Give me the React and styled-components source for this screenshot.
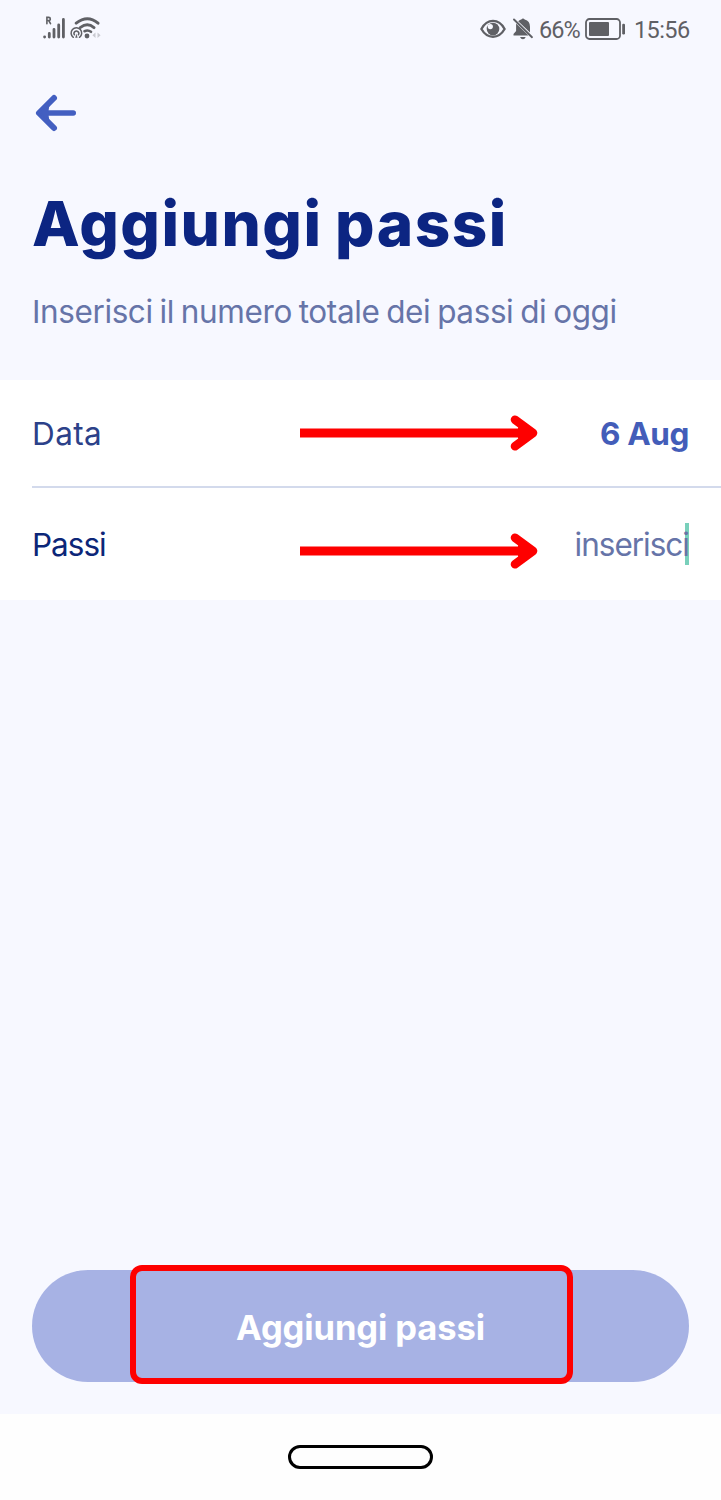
import React from 'react';
import styled, { createGlobalStyle } from 'styled-components';

const GlobalStyle = createGlobalStyle`
  * {
    box-sizing: border-box;
  }

  body {
    margin: 0;
    background: #f7f8ff;
    font-family: 'Inter', sans-serif;
  }
`;

const Screen = styled.div`
  display: flex;
  flex-direction: column;
  height: 1500px;
  width: 721px;
  background: #f7f8ff;
`;

const StatusBar = styled.div`
  display: flex;
  justify-content: space-between;
  height: 58px;
  padding-left: 42px;
  padding-right: 31px;
  color: #5f6065;
`;

const StatusGroup = styled.div`
  display: flex;
  align-items: center;
`;

const StatusIcon = styled.span`
  display: flex;
  width: ${props => props.$width}px;
  margin-left: ${props => props.$gap}px;
`;

const StatusText = styled.span`
  width: ${props => props.$width}px;
  margin-left: ${props => props.$gap}px;
  padding-top: 2px;
  font-family: 'Roboto', sans-serif;
  font-size: 23.5px;
  line-height: 28px;
  letter-spacing: ${props => props.$spacing}px;
  white-space: nowrap;
`;

const Header = styled.header`
  height: 322px;
  padding: 35px 32px 0;
`;

const BackButton = styled.button`
  display: block;
  width: 46px;
  height: 40px;
  padding: 0;
  border: 0;
  background: none;
`;

const Title = styled.h1`
  margin: 49px 0 0;
  font-size: 62px;
  line-height: 84px;
  font-weight: 800;
  letter-spacing: 1.5px;
  word-spacing: -2.5px;
  color: #0c2582;
  white-space: nowrap;
`;

const Subtitle = styled.p`
  margin: 26px 0 0;
  font-size: 31.5px;
  line-height: 40px;
  letter-spacing: -0.4px;
  word-spacing: -1.6px;
  color: #6674a8;
  white-space: nowrap;
`;

const Form = styled.div`
  height: 220px;
  padding-left: 32px;
  background: #fff;
`;

const Row = styled.div`
  display: flex;
  align-items: center;
  height: ${props => props.$height}px;
  padding-right: 32px;
  border-bottom: ${props => (props.$divider ? '2px solid #d3daec' : '0')};
`;

const Label = styled.span`
  width: 268px;
  padding-top: 1px;
  font-size: 31.5px;
  line-height: 40px;
  letter-spacing: ${props => props.$spacing}px;
  color: ${props => props.$color};
`;

const Value = styled.span`
  position: relative;
  z-index: 0;
  margin-left: auto;
  padding-top: 1px;
  font-size: 31.5px;
  line-height: 40px;
  font-weight: ${props => (props.$bold ? 700 : 400)};
  letter-spacing: ${props => props.$spacing}px;
  color: ${props => (props.$bold ? '#435db9' : '#6674a8')};
  white-space: nowrap;
`;

const Caret = styled.span`
  position: absolute;
  right: 0;
  top: -1px;
  z-index: -1;
  width: 4px;
  height: 42px;
  background: #79d0bb;
`;

const Pointer = styled.svg`
  flex: none;
  margin-top: ${props => props.$drop || 0}px;
`;

const Footer = styled.div`
  margin-top: auto;
  padding: 0 32px 32px;
`;

const SubmitButton = styled.button`
  position: relative;
  display: block;
  width: 657px;
  height: 112px;
  padding: 3px 0 0;
  border: 0;
  border-radius: 56px;
  background: #a7b2e4;
  color: #fff;
  font-family: inherit;
  font-size: 34.5px;
  font-weight: 700;
  letter-spacing: -0.1px;
`;

const Highlight = styled.span`
  position: absolute;
  left: 98px;
  top: -5px;
  width: 443px;
  height: 119px;
  border: 6px solid #fe0000;
  border-radius: 12px;
`;

const NavigationBar = styled.div`
  display: flex;
  justify-content: center;
  height: 86px;
  padding-top: 31px;
  background: #fefefe;
`;

const HomePill = styled.div`
  width: 145px;
  height: 24px;
  border: 3px solid #000;
  border-radius: 12px;
`;

const SignalIcon = () => (
  <svg width="60" height="28" viewBox="0 0 60 28" fill="none" stroke="#5f6065" strokeLinecap="round">
    <path d="M2.6 21.8V22M7.3 18.5V22M12 14.5V22M16.7 10V22M21.4 4.5V22" strokeWidth="2.8" />
    <path d="M4.9 8.7V2.4H6.7Q8.3 2.4 8.3 4T6.7 5.5H4.9M6.7 5.5L8.5 8.7" strokeWidth="1.6" />
    <path d="M34.2 8.2Q45.5-.8 56 8.2M38.5 12.4Q45.5 7.2 52 12.6" strokeWidth="2.9" />
    <path d="M42.5 16.2Q46 14.6 49 16.8" strokeWidth="2.6" />
    <circle cx="45" cy="21" r="2.4" fill="#5f6065" stroke="none" />
    <path d="M31.3 22.3A5.3 5.3 0 1 1 37.5 22.3M32.4 19.8A2.4 2.4 0 1 1 36.4 19.8" strokeWidth="1.5" />
    <path d="M34.4 18.7L33.2 22.7H35.6Z" fill="#5f6065" stroke="none" />
    <path d="M53.5 17.5L50.4 20.3L53.5 23.1ZM55.5 17.5L58.6 20.3L55.5 23.1Z" fill="#c9cad1" stroke="none" />
  </svg>
);

const EyeIcon = () => (
  <svg width="26" height="20" viewBox="0 0 26 20">
    <path d="M1.4 10C7.2-.8 18.8-.8 24.6 10C18.8 20.3 7.2 20.3 1.4 10Z" fill="none" stroke="#5f6065" strokeWidth="2.3" />
    <circle cx="13" cy="10" r="6.3" fill="#5f6065" />
    <circle cx="10.3" cy="7.6" r="2.6" fill="#f7f8ff" />
  </svg>
);

const BellOffIcon = () => (
  <svg width="22" height="24" viewBox="0 0 22 24">
    <path d="M4.1 6.5V14L1.5 17V18.6H16.5Z" fill="#5f6065" />
    <path d="M6.2 4.2Q8 2.8 9.3 2.5Q11 .4 12.7 2.5Q18 4 18 9.8V15.5Z" fill="#5f6065" />
    <path d="M8 20H13.7Q12.8 22.2 10.9 22.2T8 20Z" fill="#5f6065" />
    <path d="M2 2.5L20 20.2" stroke="#5f6065" strokeWidth="1.9" strokeLinecap="round" />
  </svg>
);

const BatteryIcon = () => (
  <svg width="41" height="22" viewBox="0 0 41 22">
    <rect x="1" y="1" width="34" height="20" rx="3.5" fill="none" stroke="#5f6065" strokeWidth="1.8" />
    <rect x="4" y="4" width="20" height="14" rx="1" fill="#5f6065" />
    <rect x="37.2" y="5.7" width="2.8" height="10.8" rx="1.2" fill="#5f6065" />
  </svg>
);

const ArrowPointer = ({ drop }) => (
  <Pointer width="238" height="36" viewBox="0 0 238 36" $drop={drop}>
    <path d="M0 18H231" stroke="#fe0000" strokeWidth="9" />
    <path d="M215 4.7L233 18L215 31.3" fill="none" stroke="#fe0000" strokeWidth="8.6" strokeLinecap="round" strokeLinejoin="round" />
    <path d="M218 12L232 18L218 24Z" fill="#fe0000" />
  </Pointer>
);

export default class App extends React.Component {
  render() {
    return (
      <Screen>
        <GlobalStyle />
        <StatusBar>
          <StatusGroup>
            <SignalIcon />
          </StatusGroup>
          <StatusGroup>
            <EyeIcon />
            <StatusIcon $width={22} $gap={6}><BellOffIcon /></StatusIcon>
            <StatusText $width={42} $gap={5} $spacing={-0.9}>66%</StatusText>
            <StatusIcon $width={41} $gap={4}><BatteryIcon /></StatusIcon>
            <StatusText $width={56} $gap={8} $spacing={-0.6}>15:56</StatusText>
          </StatusGroup>
        </StatusBar>
        <Header>
          <BackButton aria-label="Indietro">
            <svg width="46" height="40" viewBox="0 0 46 40" fill="none" stroke="#435fc1" strokeLinecap="round" strokeLinejoin="round">
              <path d="M22 5L7 20L22 35" strokeWidth="6" />
              <path d="M8 20L41.2 20" strokeWidth="5.6" />
              <path d="M8 20L16.5 13L15.5 20L16.5 27Z" fill="#435fc1" strokeWidth="1.5" />
            </svg>
          </BackButton>
          <Title>Aggiungi passi</Title>
          <Subtitle>Inserisci il numero totale dei passi di oggi</Subtitle>
        </Header>
        <Form>
          <Row $height={108} $divider>
            <Label $color="#2c4189" $spacing={0.4}>Data</Label>
            <ArrowPointer />
            <Value $bold $spacing={-0.4}>6 Aug</Value>
          </Row>
          <Row $height={112}>
            <Label $color="#0c2678" $spacing={-1}>Passi</Label>
            <ArrowPointer drop={14} />
            <Value $spacing={-1}>inserisci<Caret /></Value>
          </Row>
        </Form>
        <Footer>
          <SubmitButton>
            Aggiungi passi
            <Highlight />
          </SubmitButton>
        </Footer>
        <NavigationBar>
          <HomePill />
        </NavigationBar>
      </Screen>
    );
  }
}
